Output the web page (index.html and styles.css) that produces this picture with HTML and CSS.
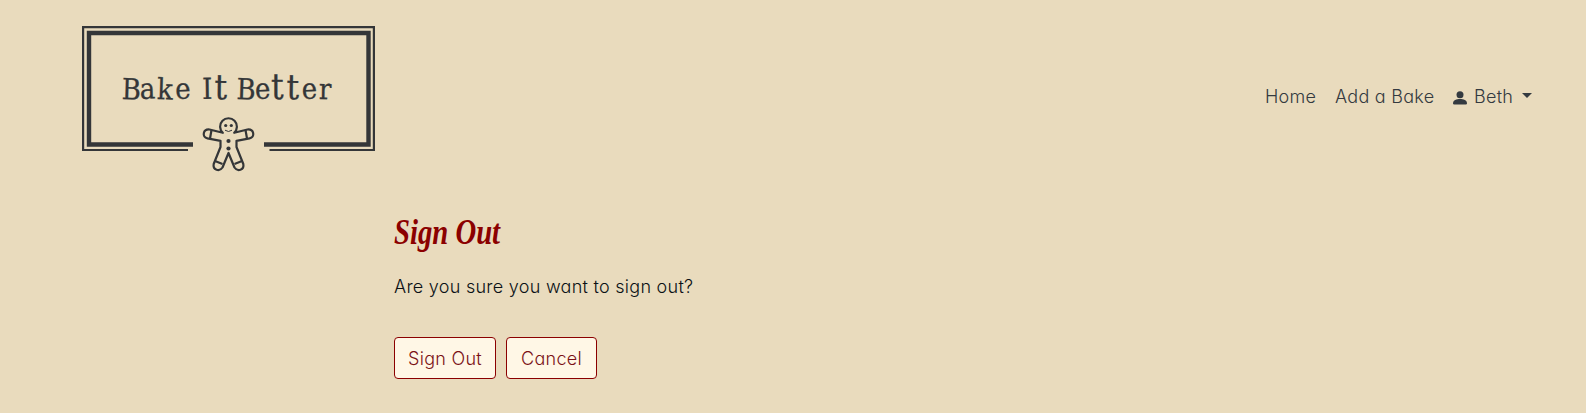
FILE: index.html
```html
<!DOCTYPE html>
<html lang="en">
<head>
<meta charset="utf-8">
<title>Bake It Better - Sign Out</title>
<link rel="stylesheet" href="styles.css">
</head>
<body>
<header class="header">
  <a class="brand" aria-label="Bake It Better">
    <svg class="logo" viewBox="0 0 294 147" width="294" height="147">
      <g class="frame">
        <path stroke-width="2.200" d="M106 124H1.100V1.100H291.900V124H187.500"/>
        <path stroke-width="4.400" d="M111 118.500H7V7H286.500V118.500H182"/>
      </g>
      <g class="wordmark" transform="scale(.9 1)">
        <text y="73" x="44 64.500 83 104" rotate="2 -2 2 -2">Bake</text>
        <text y="73" x="133.500 147" rotate="-1 1">I<tspan class="tall">t</tspan></text>
        <text y="73" x="171.500 192.500 210 227 244.500 263" rotate="2 -2 0 1 -2 1">Be<tspan class="tall">tt</tspan>er</text>
      </g>
      <g class="cookie">
        <path d="M140.800 106.800A8.400 8.400 0 1 1 152.200 106.800L165.500 103.500C172 103 173.500 111 167.500 112.300L154.500 114.800V121L161.300 138C162.500 144 155.500 146 152.500 141.500L146.500 127L140.500 141.500C137.500 146 130.500 144 131.700 138L138.500 121V114.800L125.500 112.300C119.500 111 121 103 127.500 103.500Z"/>
        <path d="M129.500 104L128 112.500M163.500 104L165 112.500M133 135L140.500 138M160 135L152.500 138"/>
        <path class="smile" d="M143 104.200Q146.500 106.800 150 104.200"/>
        <g class="dots"><circle cx="143.700" cy="99.500" r="1.600"/><circle cx="149.300" cy="99.500" r="1.600"/><circle cx="146.500" cy="115" r="2.100"/><circle cx="146.500" cy="122.500" r="2.100"/></g>
      </g>
    </svg>
  </a>
  <nav class="nav">
    <a class="link home">Home</a>
    <a class="link add">Add a Bake</a>
    <a class="link user">
      <svg class="person" viewBox="0 0 14 14" width="14" height="14"><circle cx="7" cy="3.700" r="3.500"/><path d="M0 12.500C0 9 3.500 8 7 8S14 9 14 12.500Q14 13.500 12.800 13.500H1.200Q0 13.500 0 12.500Z"/></svg>
      <span class="name">Beth</span>
      <span class="caret"></span>
    </a>
  </nav>
</header>
<main class="content">
  <h1 class="title">Sign Out</h1>
  <p class="question">Are you sure you want to sign out?</p>
  <div class="actions">
    <button class="button signout">Sign Out</button>
    <button class="button cancel">Cancel</button>
  </div>
</main>
</body>
</html>
```

FILE: styles.css
```css
* { box-sizing: border-box; }
body {
  margin: 0;
  min-height: 413px;
  background: #e9dbbd;
  color: #0b1116;
  font: 300 18px/27px Inter, "Open Sans", sans-serif;
  font-feature-settings: "cv11" 1;
  letter-spacing: .27px;
  overflow: hidden;
}
.header {
  display: flex;
  align-items: flex-start;
  justify-content: space-between;
  padding: 26px 54px 0 82px;
}
.brand, .logo { display: block; }
.frame, .cookie { fill: none; stroke: #343638; }
.cookie { stroke-width: 2.2; stroke-linejoin: round; }
.smile { stroke-width: 1; }
.dots { fill: #343638; stroke: none; }
.wordmark {
  fill: #343638;
  stroke: #343638;
  stroke-width: .3;
  font: 400 29px "DejaVu Serif", serif;
  letter-spacing: 0;
}
.tall { font-size: 35px; }
.nav { display: flex; padding-top: 57px; color: #343a40; }
.link { white-space: nowrap; }
.home { width: 70px; }
.add { width: 118px; }
.user { display: flex; width: 79px; }
.person { margin: 8px 7px 0 0; fill: #343a40; }
.name { width: 48px; }
.caret {
  width: 10px;
  height: 5px;
  margin-top: 10px;
  background: #343a40;
  clip-path: polygon(0 0, 100% 0, 50% 100%);
}
.content { padding: 40px 0 0 394px; }
.title {
  width: max-content;
  margin: 0;
  color: #8b0000;
  font: italic 700 35px/40px "Liberation Serif", serif;
  letter-spacing: 0;
  transform: scaleX(.82);
  transform-origin: left;
}
.question { margin: 20px 0 37px; }
.actions { display: flex; gap: 10px; }
.button {
  height: 42px;
  padding: 0;
  border: 1px solid #8b0000;
  border-radius: 4px;
  background: #fff7e6;
  color: #7b1216;
  font: inherit;
  font-feature-settings: inherit;
  letter-spacing: inherit;
}
.signout { width: 102px; }
.cancel { width: 91px; }
```
